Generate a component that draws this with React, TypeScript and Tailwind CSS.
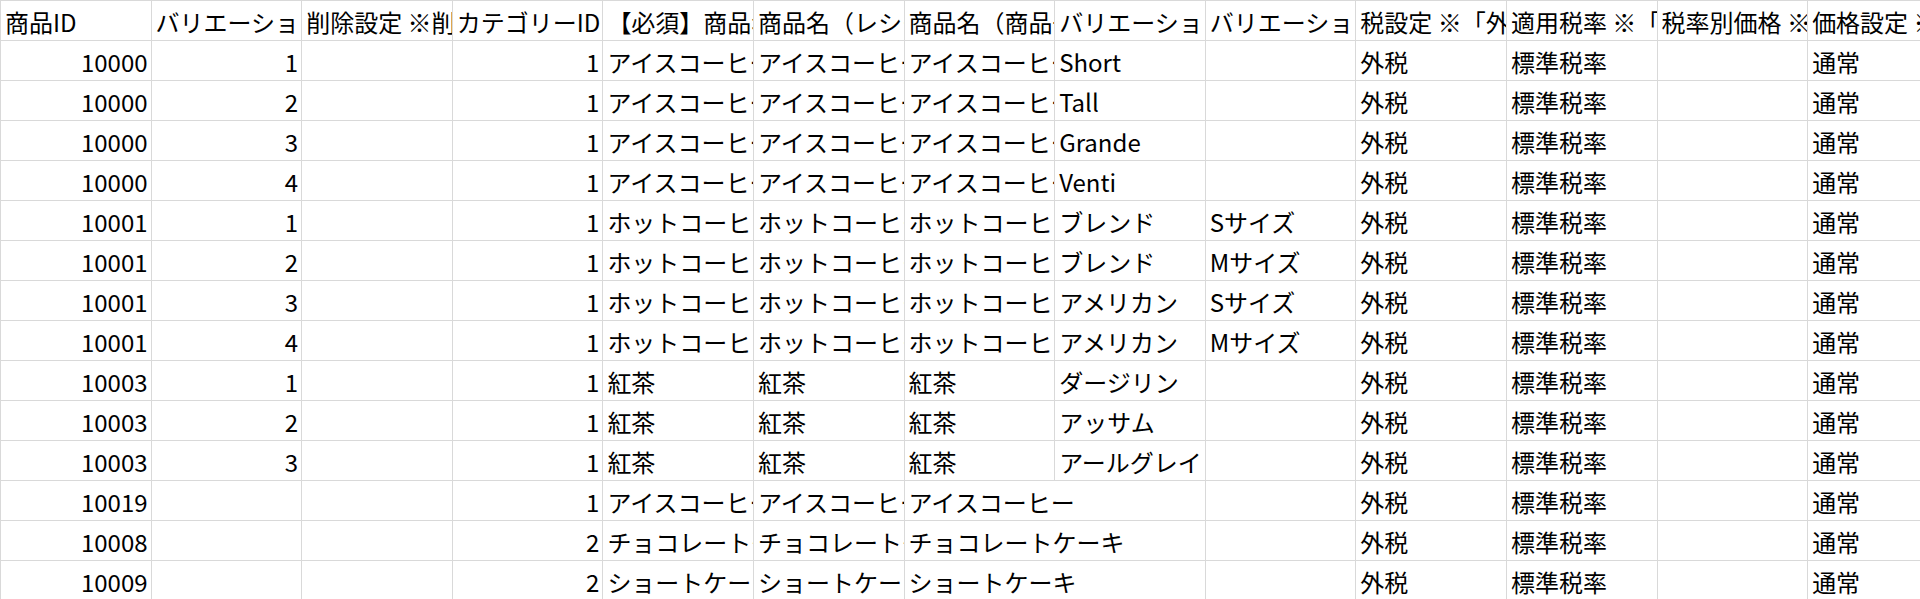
import React from "react";

type Cell = string | number;

const headers: string[] = [
  "商品ID",
  "バリエーションID",
  "削除設定 ※削除する場合は「削除」と入力",
  "カテゴリーID",
  "【必須】商品名",
  "商品名（レシート表示用）",
  "商品名（商品一覧表示用）",
  "バリエーション名1",
  "バリエーション名2",
  "税設定 ※「外税」「内税」",
  "適用税率 ※「標準税率」「軽減税率」",
  "税率別価格 ※",
  "価格設定 ※「通常」「自由」",
];

const row = (
  id: number,
  variation: number | "",
  category: number,
  name: string,
  v1: string,
  v2: string
): Cell[] => [id, variation, "", category, name, name, name, v1, v2, "外税", "標準税率", "", "通常"];

const rows: Cell[][] = [
  row(10000, 1, 1, "アイスコーヒー", "Short", ""),
  row(10000, 2, 1, "アイスコーヒー", "Tall", ""),
  row(10000, 3, 1, "アイスコーヒー", "Grande", ""),
  row(10000, 4, 1, "アイスコーヒー", "Venti", ""),
  row(10001, 1, 1, "ホットコーヒー", "ブレンド", "Sサイズ"),
  row(10001, 2, 1, "ホットコーヒー", "ブレンド", "Mサイズ"),
  row(10001, 3, 1, "ホットコーヒー", "アメリカン", "Sサイズ"),
  row(10001, 4, 1, "ホットコーヒー", "アメリカン", "Mサイズ"),
  row(10003, 1, 1, "紅茶", "ダージリン", ""),
  row(10003, 2, 1, "紅茶", "アッサム", ""),
  row(10003, 3, 1, "紅茶", "アールグレイ", ""),
  row(10019, "", 1, "アイスコーヒー", "", ""),
  row(10008, "", 2, "チョコレートケーキ", "", ""),
  row(10009, "", 2, "ショートケーキ", "", ""),
];

// 全角 ≒ 24px, 半角 ≒ 12px
const textWidth = (s: string) =>
  [...s].reduce((w, ch) => w + (ch.charCodeAt(0) > 0xff ? 24 : 12), 0);

const SheetRow = ({ cells, header }: { cells: Cell[]; header?: boolean }) => {
  const out: React.ReactNode[] = [];
  for (let i = 0; i < cells.length; i++) {
    const value = cells[i];
    const isNum = typeof value === "number";
    // Excel: text spills into the empty cell to its right
    const spill =
      !header &&
      !isNum &&
      value !== "" &&
      i + 1 < cells.length &&
      cells[i + 1] === "" &&
      textWidth(String(value)) > 144;
    out.push(
      <div
        key={i}
        className={
          "border-r border-b border-[#d9d9d9] overflow-hidden whitespace-nowrap leading-[41px] " +
          (isNum ? "text-right pr-[3px] " : "text-left pl-[4px] ") +
          (spill ? "col-span-2" : "")
        }
      >
        {value}
      </div>
    );
    if (spill) i++;
  }
  return <>{out}</>;
};

export default function App() {
  return (
    <div
      className="w-[1920px] h-[599px] overflow-hidden bg-white text-black text-[24px]"
      style={{ fontFamily: '"Noto Sans CJK JP", "Noto Sans", sans-serif' }}
    >
      <div className="grid grid-cols-[repeat(13,150.6px)] auto-rows-[40px] border-l border-t border-[#d9d9d9] w-max">
        <SheetRow cells={headers} header />
        {rows.map((r, idx) => (
          <SheetRow key={idx} cells={r} />
        ))}
      </div>
    </div>
  );
}
